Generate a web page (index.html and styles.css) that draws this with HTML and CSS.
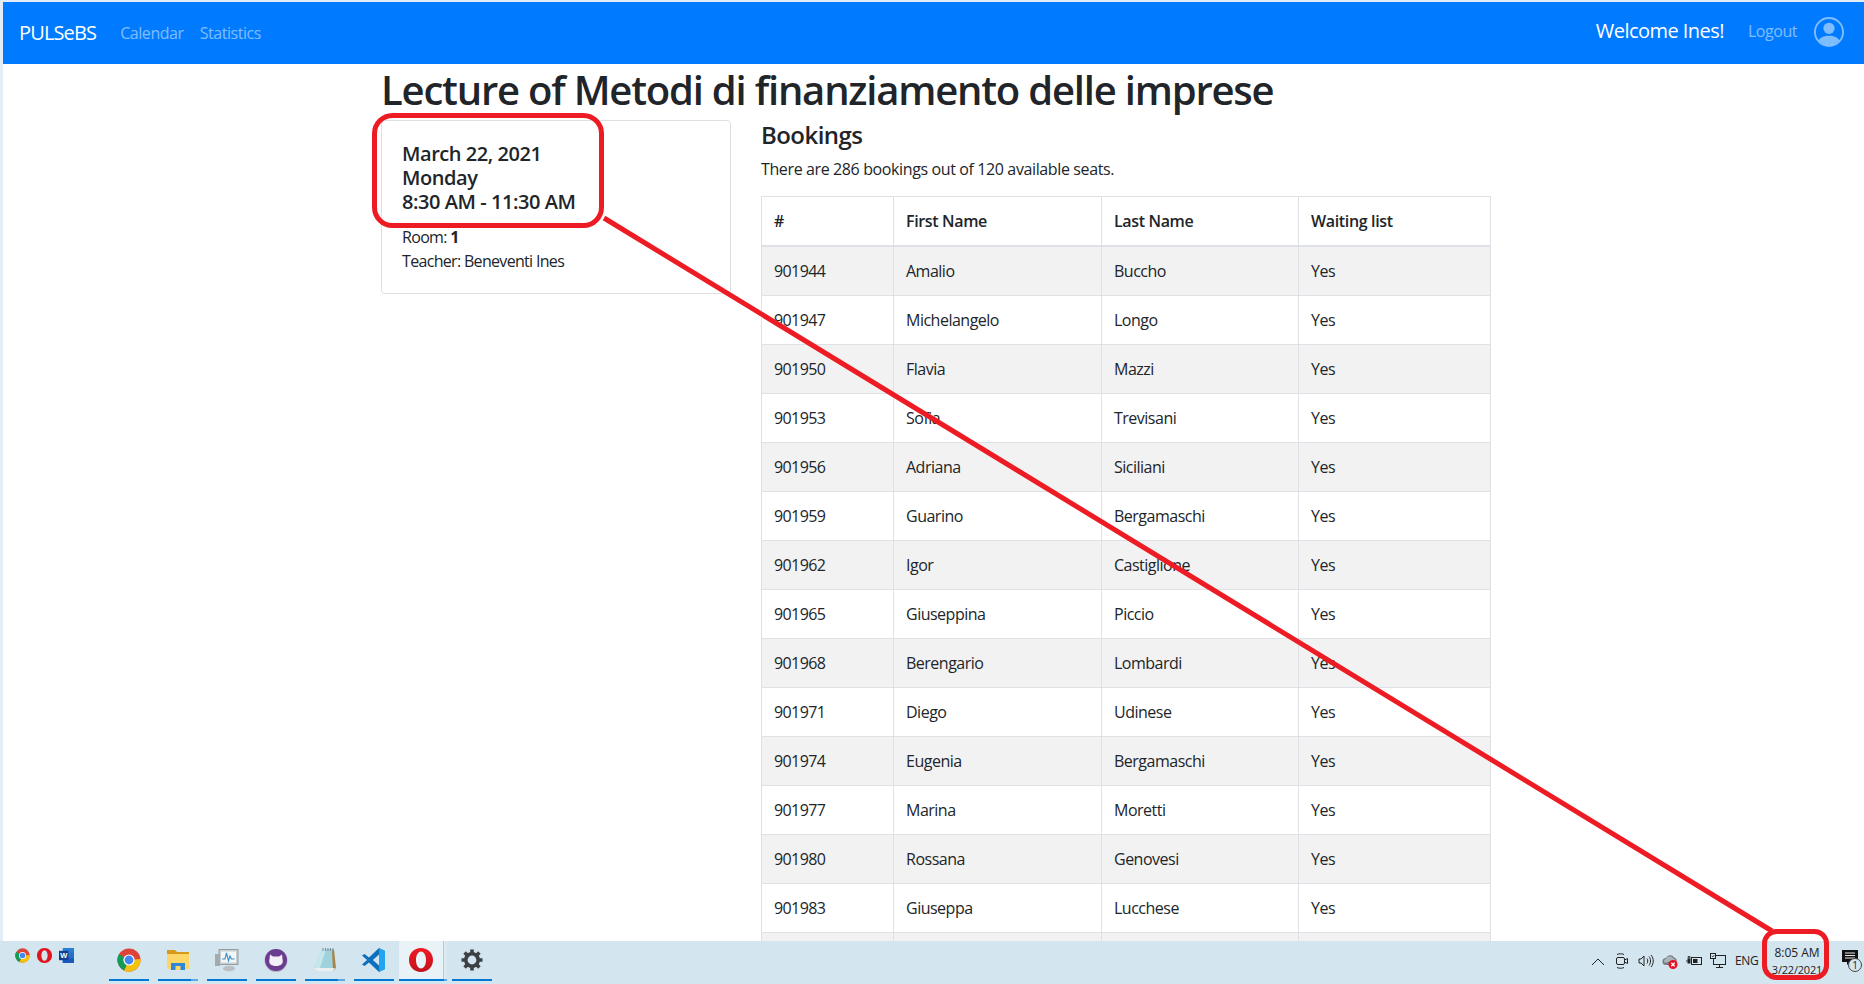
FILE: index.html
```html
<!DOCTYPE html>
<html>
  <head>
    <meta charset="utf-8" />
    <title>PULSeBS</title>
    <link rel="stylesheet" href="styles.css">
  </head>
  <body>
    <nav class="navbar">
      <a class="brand">PULSeBS</a>
      <a class="nav-link">Calendar</a>
      <a class="nav-link">Statistics</a>
      <span class="welcome">Welcome Ines!</span>
      <a class="nav-link logout">Logout</a>
      <svg class="user-icon" viewBox="0 0 16 16" fill="currentColor">
        <path d="M13.468 12.37C12.758 11.226 11.195 10 8 10s-4.757 1.225-5.468 2.37A6.987 6.987 0 0 0 8 15a6.987 6.987 0 0 0 5.468-2.63z"/>
        <path fill-rule="evenodd" d="M8 9a3 3 0 1 0 0-6 3 3 0 0 0 0 6z"/>
        <path fill-rule="evenodd" d="M8 1a7 7 0 1 0 0 14A7 7 0 0 0 8 1zM0 8a8 8 0 1 1 16 0A8 8 0 0 1 0 8z"/>
      </svg>
    </nav>

    <main class="page">
      <div class="container">
        <h1 class="title">Lecture of Metodi di finanziamento delle imprese</h1>
        <div class="row">
          <div class="col-left">
            <div class="card">
              <h5 class="card-title">March 22, 2021<br>Monday<br>8:30 AM - 11:30 AM</h5>
              <p class="card-text">Room: <b>1</b></p>
              <p class="card-text">Teacher: Beneventi Ines</p>
            </div>
          </div>
          <div class="col-right">
            <h4 class="bookings-title">Bookings</h4>
            <p class="bookings-text">There are 286 bookings out of 120 available seats.</p>
            <table class="table">
              <colgroup>
                <col class="col-id"><col class="col-first"><col class="col-last"><col class="col-wait">
              </colgroup>
              <thead>
                <tr><th>#</th><th>First Name</th><th>Last Name</th><th>Waiting list</th></tr>
              </thead>
              <tbody>
                <tr><td>901944</td><td>Amalio</td><td>Buccho</td><td>Yes</td></tr>
                <tr><td>901947</td><td>Michelangelo</td><td>Longo</td><td>Yes</td></tr>
                <tr><td>901950</td><td>Flavia</td><td>Mazzi</td><td>Yes</td></tr>
                <tr><td>901953</td><td>Sofia</td><td>Trevisani</td><td>Yes</td></tr>
                <tr><td>901956</td><td>Adriana</td><td>Siciliani</td><td>Yes</td></tr>
                <tr><td>901959</td><td>Guarino</td><td>Bergamaschi</td><td>Yes</td></tr>
                <tr><td>901962</td><td>Igor</td><td>Castiglione</td><td>Yes</td></tr>
                <tr><td>901965</td><td>Giuseppina</td><td>Piccio</td><td>Yes</td></tr>
                <tr><td>901968</td><td>Berengario</td><td>Lombardi</td><td>Yes</td></tr>
                <tr><td>901971</td><td>Diego</td><td>Udinese</td><td>Yes</td></tr>
                <tr><td>901974</td><td>Eugenia</td><td>Bergamaschi</td><td>Yes</td></tr>
                <tr><td>901977</td><td>Marina</td><td>Moretti</td><td>Yes</td></tr>
                <tr><td>901980</td><td>Rossana</td><td>Genovesi</td><td>Yes</td></tr>
                <tr><td>901983</td><td>Giuseppa</td><td>Lucchese</td><td>Yes</td></tr>
                <tr><td>&nbsp;</td><td></td><td></td><td></td></tr>
              </tbody>
            </table>
          </div>
        </div>
      </div>
    </main>

    <footer class="taskbar">
      <div class="pinned-small">
        <svg viewBox="0 0 24 24"><circle cx="12" cy="12" r="11.500" fill="#db4437"/><path d="M12 12 L2 17.800 A11.500 11.500 0 0 1 2 6.200z" fill="#0f9d58"/><path d="M12 12 L23.500 11 A11.500 11.500 0 0 1 7 22.400z" fill="#f4c20d"/><path d="M12 12 L7 22.400 A11.500 11.500 0 0 1 2 17.800z" fill="#0f9d58"/><circle cx="12" cy="12" r="5.600" fill="#fff"/><circle cx="12" cy="12" r="4.400" fill="#4285f4"/></svg>
        <svg class="small-opera" viewBox="0 0 24 24"><path fill-rule="evenodd" d="M12 0C5 0 0 5.400 0 12s5 12 12 12 12-5.400 12-12S19 0 12 0zM12 3.500c3 0 5 3.800 5 8.500s-2 8.500-5 8.500S7 16.700 7 12 9 3.500 12 3.500z" fill="#e0151f"/></svg>
        <svg viewBox="0 0 16 16"><rect x="4" y="0" width="12" height="16" fill="#2b7cd3"/><rect x="4" y="5" width="12" height="5.500" fill="#2b6fc4"/><rect x="4" y="10.500" width="12" height="5.500" fill="#185abd"/><rect x="0" y="3" width="10" height="10" fill="#103f91"/><text x="5" y="11" class="word-w">W</text></svg>
      </div>
      <div class="app-list">
        <div class="app">
          <svg viewBox="0 0 24 24"><circle cx="12" cy="12" r="11.500" fill="#db4437"/><path d="M12 12 L2 17.800 A11.500 11.500 0 0 1 2 6.200z" fill="#0f9d58"/><path d="M12 12 L23.500 11 A11.500 11.500 0 0 1 7 22.400z" fill="#f4c20d"/><path d="M12 12 L7 22.400 A11.500 11.500 0 0 1 2 17.800z" fill="#0f9d58"/><circle cx="12" cy="12" r="5.600" fill="#fff"/><circle cx="12" cy="12" r="4.400" fill="#4285f4"/></svg>
        </div>
        <div class="app app-open">
          <svg viewBox="0 0 24 24"><path d="M1 2h8l2 2h12v4H1z" fill="#d99a1c"/><rect x="1" y="6" width="22" height="15" fill="#fcd768"/><rect x="5" y="15" width="14" height="7" fill="#2f87d8"/><rect x="9.500" y="18" width="5" height="4" fill="#fcd768"/></svg>
        </div>
        <div class="app">
          <svg viewBox="0 0 24 24"><rect x="4" y="1.500" width="19" height="15" fill="#c9ced1" stroke="#969da1"/><rect x="6" y="3.500" width="15" height="11" fill="#f1f6f8"/><path d="M7 11h3l1.500-6 2 8 1.500-5 1.500 3h3" fill="none" stroke="#3f8fc9" stroke-width="1.100"/><rect x="0" y="6" width="5" height="12" fill="#a4abaf"/><ellipse cx="14" cy="20.500" rx="6" ry="2.800" fill="#b9bfc3"/></svg>
        </div>
        <div class="app">
          <svg viewBox="0 0 24 24"><circle cx="12" cy="12.500" r="11.500" fill="#b9b3c0"/><circle cx="12" cy="12" r="11" fill="#6a3d91"/><path d="M6 6.500l3 2h6l3-2 .8 7c0 3-3.200 4.500-6.800 4.500S5.200 16.500 5.200 13.500z" fill="#f3eff6"/></svg>
        </div>
        <div class="app app-open">
          <svg viewBox="0 0 24 24"><path d="M9 1h12l1 19H1z" fill="#9fd2dd"/><path d="M9 1 1 20h6L13 1z" fill="#c5e6ec"/><path d="M21 2l2 18-3 3-1-20z" fill="#a98448"/><path d="M1 20h21l-2 3H4z" fill="#e9eef0"/><path d="M10 0v3M12.500 0v3M15 0v3M17.500 0v3M20 0v3" stroke="#6c7a80" stroke-width=".8"/></svg>
        </div>
        <div class="app">
          <svg viewBox="0 0 24 24"><path d="M17 0 23 3v18l-6 3L7 14.500 2.500 18 0 16.500 5 12 0 7.500 2.500 6 7 9.500z" fill="#0e6fbd"/><path d="M17 0 23 3v18l-6 3z" fill="#23a4ee"/><path d="M17 6.500 10.800 12 17 17.500z" fill="#d3e5ef"/></svg>
        </div>
        <div class="app app-active">
          <svg viewBox="0 0 24 24"><defs><linearGradient id="opera-red" x1="0" y1="0" x2="0" y2="1"><stop offset="0" stop-color="#f01a24"/><stop offset="1" stop-color="#c4101b"/></linearGradient></defs><path fill-rule="evenodd" d="M12 0C5 0 0 5.400 0 12s5 12 12 12 12-5.400 12-12S19 0 12 0zM12 3.500c3 0 5 3.800 5 8.500s-2 8.500-5 8.500S7 16.700 7 12 9 3.500 12 3.500z" fill="url(#opera-red)"/></svg>
        </div>
        <div class="app">
          <svg viewBox="0 0 24 24"><circle cx="12" cy="12" r="6.200" fill="none" stroke="#3c4043" stroke-width="3.600"/><path d="M12 1.500v4M12 18.500v4M1.500 12h4M18.500 12h4M4.600 4.600l2.800 2.800M16.600 16.600l2.800 2.800M4.600 19.400l2.800-2.800M16.600 7.400l2.800-2.800" stroke="#3c4043" stroke-width="3.600"/></svg>
        </div>
      </div>
      <div class="tray">
        <svg class="tray-icon" viewBox="0 0 16 16"><path d="M2 12l6-6 6 6" class="tray-line"/></svg>
        <svg class="tray-icon" viewBox="0 0 16 16"><rect x="2.500" y="4.500" width="8" height="7" rx="1.500" class="tray-line"/><path d="M10.500 7l3-1.500v5l-3-1.500M3 1.500c2-1 5-1 7 0M3 14.500c2 1 5 1 7 0" class="tray-line"/></svg>
        <svg class="tray-icon" viewBox="0 0 16 16"><path d="M1 6h2l3-3v10l-3-3H1zM9 5.500c1 1.500 1 3.500 0 5M11 3.500c2 2.500 2 6.500 0 9M13 2c3 3.500 3 8.500 0 12" class="tray-line"/></svg>
        <svg class="tray-icon" viewBox="0 0 16 16"><path d="M4 12a3.500 3.500 0 0 1 0-7 4.500 4.500 0 0 1 8-.5 3 3 0 0 1 2.500 4V12z" fill="#77797b"/><path d="M4 10a2 2 0 0 1 0-4 3.800 3.800 0 0 1 7-.8 3 3 0 0 1 2 3.800H6z" fill="#d3e5ef" opacity=".55"/><circle cx="11" cy="11.500" r="4.500" fill="#e81123"/><path d="M9.300 9.800l3.400 3.400M12.700 9.800l-3.400 3.400" stroke="#fff" stroke-width="1.300"/></svg>
        <svg class="tray-icon" viewBox="0 0 16 16"><rect x="5.500" y="4.500" width="10" height="7" class="tray-line"/><rect x="7" y="6" width="4.500" height="4" fill="#222"/><path d="M0 8h1.500" class="tray-line"/><rect x="1.500" y="5.500" width="3" height="5" fill="#222"/><path d="M2.300 3v2.500M3.800 3v2.500" class="tray-line"/></svg>
        <svg class="tray-icon" viewBox="0 0 16 16"><rect x="3.500" y="2.500" width="12" height="9" class="tray-line"/><path d="M9.500 11.500v3M6 14.500h7" class="tray-line"/><rect x=".5" y=".5" width="5" height="5" fill="#d3e5ef" stroke="#222"/><path d="M1.800 3l1 1 1.500-2" fill="none" stroke="#222" stroke-width=".8"/></svg>
        <span class="lang">ENG</span>
        <div class="clock"><span>8:05 AM</span><span class="clock-date">3/22/2021</span></div>
        <div class="notify">
          <svg viewBox="0 0 16 16"><path d="M0 0h16v12H8l-3 3v-3H0z" fill="#111"/><path d="M3 3h10M3 5.500h10M3 8h10" stroke="#fff" stroke-width=".9"/></svg>
          <span class="notify-badge">1</span>
        </div>
      </div>
    </footer>

    <!-- red marks drawn over the screenshot -->
    <svg class="annotation" viewBox="0 0 1864 984">
      <rect x="374.500" y="115.500" width="227" height="110" rx="18" />
      <rect x="1764.500" y="931.500" width="62" height="46" rx="12" />
      <path d="M604 218 L1772 931" />
    </svg>
  </body>
</html>
```

FILE: styles.css
```css
* {
  box-sizing: border-box;
}
body {
  margin: 0;
  height: 984px;
  overflow: hidden;
  display: flex;
  flex-direction: column;
  background: #e3edf5;
  padding: 2px 0 0 3px;
  font-family: "Open Sans", sans-serif;
  font-size: 16px;
  line-height: 24px;
  letter-spacing: -0.35px;
  color: #212529;
}
.navbar {
  height: 62px;
  flex: none;
  display: flex;
  align-items: center;
  padding: 0 20px 0 16px;
  background: #007bff;
}
.brand {
  font-size: 20px;
  letter-spacing: -0.85px;
  color: #fff;
  margin-right: 16px;
}
.nav-link {
  color: rgba(255, 255, 255, 0.5);
  padding: 0 8px;
  letter-spacing: -0.45px;
}
.welcome {
  margin-left: auto;
  font-size: 20px;
  letter-spacing: -0.55px;
  color: #fff;
  margin-right: 16px;
  padding-bottom: 4px;
}
.logout {
  padding-bottom: 4px;
}
.user-icon {
  width: 30px;
  height: 30px;
  margin-left: 9px;
  color: rgba(255, 255, 255, 0.5);
  margin-bottom: 2px;
}

.page {
  flex: 1;
  min-height: 0;
  background: #fff;
}
.container {
  width: 1140px;
  margin-left: 363px;
}
.title {
  font-size: 40px;
  line-height: 48px;
  font-weight: 550;
  letter-spacing: -1.2px;
  margin: 0 15px 6px;
  padding-top: 2px;
}
.row {
  display: flex;
}
.col-left {
  width: 380px;
  padding: 0 15px;
}
.col-right {
  width: 760px;
  padding: 0 15px;
}
.card {
  border: 1px solid rgba(0, 0, 0, 0.125);
  border-radius: 4px;
  padding: 20px;
}
.card-title {
  font-size: 20px;
  line-height: 24px;
  font-weight: 550;
  letter-spacing: -0.45px;
  margin: 1px 0 11px;
}
.card-text {
  margin: 0;
  letter-spacing: -0.68px;
}
.bookings-title {
  font-size: 24px;
  line-height: 29px;
  font-weight: 550;
  letter-spacing: -0.55px;
  margin: 0 0 8px;
}
.bookings-text {
  margin: 0 0 15px;
  letter-spacing: -0.38px;
}

.table {
  width: 729px;
  table-layout: fixed;
  border-collapse: collapse;
}
.col-id {
  width: 132px;
}
.col-first {
  width: 208px;
}
.col-last {
  width: 197px;
}
.col-wait {
  width: 192px;
}
.table th,
.table td {
  border: 1px solid #dee2e6;
  padding: 12px;
  height: 49px;
  text-align: left;
  letter-spacing: -0.5px;
}
.table th {
  border-bottom-width: 2px;
  font-weight: 600;
  letter-spacing: -0.35px;
}
.table td:first-child {
  letter-spacing: -0.6px;
}
.table tbody tr:nth-child(odd) {
  background: #f2f2f2;
}

.taskbar {
  position: relative;
  flex: none;
  height: 43px;
  margin-left: -3px;
  padding-bottom: 3px;
  display: flex;
  align-items: stretch;
  background: #d3e5ef;
}
.pinned-small {
  width: 109px;
  display: flex;
  gap: 7px;
  padding: 7px 0 0 15px;
}
.pinned-small svg {
  width: 15px;
  height: 15px;
}
.small-opera {
  flex: none;
}
.word-w {
  font-family: "Liberation Sans", sans-serif;
  font-size: 8px;
  font-weight: 700;
  fill: #fff;
  text-anchor: middle;
}
.app-list {
  display: flex;
  gap: 9px;
}
.app {
  width: 40px;
  display: flex;
  align-items: center;
  justify-content: center;
  border-bottom: 2px solid #0078d4;
}
.app svg {
  width: 24px;
  height: 24px;
}
.app-open {
  border-image: linear-gradient(to right, #0078d4 80%, #5ca9e5 80%) 1;
}
.app-active {
  width: 48px;
  margin: 0 -4px;
  padding-right: 4px;
  background: linear-gradient(to right, #e8f2f7 44px, #bfcad0 44px, #bfcad0 45px, #dbe9f1 45px);
  border-image: linear-gradient(to right, #0078d4 92%, #5ca9e5 92%) 1;
}
.tray {
  margin-left: auto;
  display: flex;
  align-items: center;
  font-size: 12px;
  letter-spacing: 0;
}
.tray-icon {
  width: 16px;
  height: 16px;
  margin-right: 8px;
}
.tray-line {
  fill: none;
  stroke: #222;
  stroke-width: 1;
}
.lang {
  width: 24px;
  margin: 0 5px 0 1px;
  color: #222;
  font-size: 12px;
  letter-spacing: -0.3px;
}
.clock {
  width: 66px;
  display: flex;
  flex-direction: column;
  align-items: center;
  font-size: 12px;
  line-height: 17px;
  color: #222;
  margin-right: 12px;
}
.clock-date {
  font-size: 11px;
  letter-spacing: -0.2px;
}
.notify {
  width: 22px;
  height: 24px;
  position: relative;
}
.notify svg {
  display: block;
  width: 16px;
  height: 16px;
  margin-top: 1px;
}
.notify-badge {
  position: absolute;
  right: 2px;
  top: 9px;
  width: 14px;
  height: 14px;
  border-radius: 50%;
  background: #d3e5ef;
  border: 1px solid #444;
  font-size: 10px;
  line-height: 12px;
  text-align: center;
}

.annotation {
  position: absolute;
  left: 0;
  top: 0;
  width: 1864px;
  height: 984px;
  pointer-events: none;
  fill: none;
  stroke: #ed1c24;
  stroke-width: 5;
}
```
